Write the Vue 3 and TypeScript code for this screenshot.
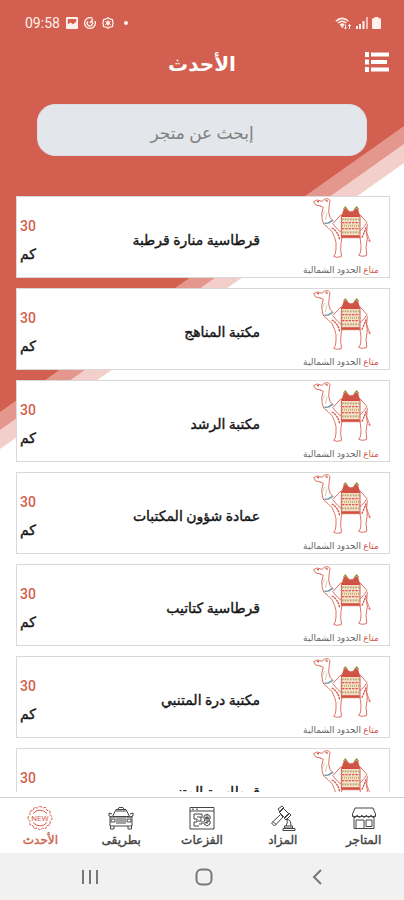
<script setup lang="ts">
import { ref } from 'vue'

interface Store {
  id: number
  name: string
  distance: number
}

interface Tab {
  id: string
  label: string
}

const query = ref('')
const activeTab = ref('latest')

const stores: Store[] = [
  { id: 1, name: 'قرطاسية منارة قرطبة', distance: 30 },
  { id: 2, name: 'مكتبة المناهج', distance: 30 },
  { id: 3, name: 'مكتبة الرشد', distance: 30 },
  { id: 4, name: 'عمادة شؤون المكتبات', distance: 30 },
  { id: 5, name: 'قرطاسية كتاتيب', distance: 30 },
  { id: 6, name: 'مكتبة درة المتنبي', distance: 30 },
  { id: 7, name: 'قرطاسية المتنبي', distance: 30 },
]

const tabs: Tab[] = [
  { id: 'stores', label: 'المتاجر' },
  { id: 'auction', label: 'المزاد' },
  { id: 'help', label: 'الفزعات' },
  { id: 'route', label: 'بطريقى' },
  { id: 'latest', label: 'الأحدث' },
]
</script>

<template>
  <div class="app" dir="rtl">
    <svg class="backdrop" viewBox="0 0 404 450" preserveAspectRatio="none" aria-hidden="true">
      <path d="M0 0H404V163L0 449Z" fill="#f3cfcb" />
      <path d="M0 0H404V144L0 430Z" fill="#e4978d" />
      <path d="M0 0H404V126L0 412Z" fill="#d25f4f" />
    </svg>

    <div class="status" dir="ltr">
      <div class="status-group">
        <span class="clock">09:58</span>
        <svg class="glyph" viewBox="0 0 12 12"><path d="M1 0h10a1 1 0 0 1 1 1v10a1 1 0 0 1-1 1H1a1 1 0 0 1-1-1V1a1 1 0 0 1 1-1zm.8 2v5.5L4.500 5.500 7 7.200l3.200-2.500V2z" fill="currentColor" fill-rule="evenodd" /></svg>
        <svg class="glyph" viewBox="0 0 12 12" fill="none" stroke="currentColor"><path d="M8.500 1.200A5.400 5.400 0 1 0 11 4" stroke-width="1.300" /><path d="M4 4.200A2.700 2.700 0 1 0 8 4.500M6 6l3-4" stroke-width="1.300" /></svg>
        <svg class="glyph" viewBox="0 0 12 12" fill="none" stroke="currentColor"><path d="M6 .7l2 1.200 2.600.7v2.500L11.300 6l-.7 1.300v2.300L8 10.100 6 11.300l-2-1.200-2.600-.5V7.300L.7 6l.7-1.300V2.600L4 1.900z" stroke-width="1.200" /><circle cx="6" cy="6" r="1.500" fill="currentColor" /><path d="M6 2.500v7M3 4.200l6 3.600M9 4.200L3 7.800" stroke-width=".7" /></svg>
        <span class="dot"></span>
      </div>
      <div class="status-group tight">
        <svg class="wifi" viewBox="0 0 17 13" fill="none" stroke="currentColor"><path d="M.8 4.200Q7 -1.500 13.500 4.200M3 6q4-3.600 8.200 0M5.200 8q2-1.700 4 0" stroke-width="1.500" /><path d="M7.200 11L5 8.300h4.400z" fill="currentColor" stroke="none" /><path d="M10.500 12V7.500M9 10.500l1.500 1.500 1.500-1.500M14.500 7.500V12M13 9l1.500-1.500L16 9" stroke-width="1" /></svg>
        <svg class="signal" viewBox="0 0 12 12" fill="currentColor"><path d="M0 9h2v3H0zM3 7h2v5H3zM6.500 4h2v8h-2z" /><path d="M10 0h2v12h-2z" opacity=".65" /></svg>
        <svg class="battery" viewBox="0 0 9 12"><path d="M2.500 0h4v1.200H8a1 1 0 0 1 1 1V11a1 1 0 0 1-1 1H1a1 1 0 0 1-1-1V2.200a1 1 0 0 1 1-1h1.500z" fill="currentColor" /></svg>
      </div>
    </div>

    <header class="header">
      <button class="menu" type="button" aria-label="القائمة">
        <svg viewBox="0 0 24 20" fill="currentColor"><path d="M0 0h4v5H0zM6 .5h18v4H6zM0 7.500h4v5H0zM6 8h16v4H6zM0 15h4v5H0zM6 15.500h18v4H6z" /></svg>
      </button>
      <h1>الأحدث</h1>
    </header>

    <form class="search" @submit.prevent>
      <input v-model="query" type="text" placeholder="إبحث عن متجر" aria-label="إبحث عن متجر" />
    </form>

    <svg class="defs" aria-hidden="true">
      <symbol id="camel" viewBox="0 0 180 180">
        <g fill="none" stroke="#dd7365" stroke-width="3" stroke-linejoin="round" stroke-linecap="round">
          <path d="M28 24L14 21 8 11 18 6 34 10 40 3 52 2 57 8 55 20 53 42 57 58 66 68" />
          <path d="M28 24l9 4-5 18 2 20 4 12 13 11 12 12 8 18 4 14v20l-2 14-5 8 9 3 14-2v-8l-2-10 1-24 3-15" />
          <path d="M66 76L90 50M66 78l14 16 10 8M147 50l21 24-8 11-13 14" />
          <path d="M147 118l3 24-1 20-6 10 10 3 14-2v-8l-2-16 4-28M169 80l-2 22 5 16 6 13-5-3M165 92l4 29" />
        </g>
        <path d="M18 11h6M44 7l6 3" stroke="#cb5144" stroke-width="4" />
        <path d="M43 66l5-22M34 54l7-16" stroke="#b1b785" stroke-width="2" />
        <path d="M40 76l12-1 14-8" fill="none" stroke="#77a1a9" stroke-width="5" />
        <path d="M62 90q18 8 24 34M165 88q-4 14-13 32" fill="none" stroke="#d7584b" stroke-width="4" stroke-dasharray="7 2" />
        <path d="M92 52l6-18 8-3 9 9h10l8-9 8 3 6 18z" fill="#cf5546" />
        <path d="M98 33l5-6 6 7M131 33l6-6 6 7" fill="none" stroke="#9b9145" stroke-width="4" />
        <path d="M91 52h56v67H91z" fill="#f3dfc8" stroke="#d7594c" stroke-width="3" />
        <path d="M92 54h54M92 115h54" stroke="#d14f40" stroke-width="6" />
        <path d="M93 64h52M93 103h52" stroke="#b9a873" stroke-width="5" stroke-dasharray="5 3" />
        <path d="M93 74h52M93 92h52" stroke="#d85b4d" stroke-width="4" stroke-dasharray="7 3" />
        <path d="M93 83h52" stroke="#c7ae62" stroke-width="6" stroke-dasharray="3 3" />
      </symbol>
    </svg>

    <main class="list">
      <article v-for="store in stores" :key="store.id" class="card">
        <div class="logo">
          <svg class="camel"><use href="#camel" /></svg>
          <p class="caption"><span>متاع</span> الحدود الشمالية</p>
        </div>
        <h2>{{ store.name }}</h2>
        <div class="distance">
          <span class="value">{{ store.distance }}</span>
          <span class="unit">كم</span>
        </div>
      </article>
    </main>

    <nav class="tabs">
      <button
        v-for="tab in tabs"
        :key="tab.id"
        type="button"
        :class="{ active: tab.id === activeTab }"
        @click="activeTab = tab.id"
      >
        <svg viewBox="0 0 26 26" fill="none" stroke="currentColor" stroke-width="1">
          <template v-if="tab.id === 'stores'">
            <path d="M4 3h18l2.500 6v2.500H1.500V9zM3 12v11.500h20V12M5 15h8v8.500M15 15h6v6.500h-6zM5 15v8" />
            <path d="M1.500 10q2.400 5 4.700 0 2.300 5 4.600 0 2.300 5 4.600 0 2.300 5 4.600 0 2.300 5 4.500 0" />
          </template>
          <template v-else-if="tab.id === 'auction'">
            <path d="M8 4l4-3 2 2-4 4zM9 7l4-4 6 6-4 4zM14 13l5-5 2 2-5 5zM10.500 9.500l2.500 2.500-8.500 9-3-3z" />
            <path d="M3 16.500l3 3M16 14q5 0 5 7M17 14q1 4-1 7M14.500 21h8v2h-8zM13 23.500h12v2H13z" />
          </template>
          <template v-else-if="tab.id === 'help'">
            <path d="M1 2.500h24v21.500H1zM1 6h24M3 4.200h2M7 4.200h2" />
            <path d="M5 9h8v4M5 9v5h3v3H5v4h5M8 12h4v4h-3M13 16v3h-3" />
            <path d="M18 9l3 2v3l-1.500 1 1.500 1v3l-3 2-3-2v-3l1.500-1-1.500-1v-3zM16 12l4 2M20 12l-4 2M16 18l4-2M18 10v9" />
          </template>
          <template v-else-if="tab.id === 'route'">
            <path d="M10 4l1-1.500h4L16 4M8 4.500h10l3.500 7h-17zM4 9L1 8v3l3 1M22 9l3-1v3l-3 1M2 12h22v9H2zM2.500 21v3H6v-3M20 21v3h3.500v-3" />
            <path d="M3 14h4v3H3zM19 14h4v3h-4zM8 14h10M8 16h10M8 18h10M8 6h10" />
          </template>
          <template v-else>
            <path d="M13 1l2.500 2 3.200-.6 1.300 2.900 3.100 1-.1 3.200 2 2.500v2l-2 2.500.1 3.200-3.100 1-1.300 2.900-3.200-.6L13 25l-2.500-2-3.200.6L6 20.700l-3.100-1 .1-3.200L1 14v-2l2-2.500-.1-3.200L6 5.300l1.300-2.900 3.200.6z" stroke-dasharray="3 1" />
            <path d="M6 8.500a9 9 0 0 1 14 0M6 17.500a9 9 0 0 0 14 0" />
            <text class="badge" x="13" y="16" text-anchor="middle">NEW</text>
          </template>
        </svg>
        <span>{{ tab.label }}</span>
      </button>
    </nav>

    <footer class="system" dir="ltr">
      <button type="button" aria-label="التطبيقات الأخيرة">
        <svg viewBox="0 0 18 18"><path d="M2 2v14M9 2v14M16 2v14" /></svg>
      </button>
      <button type="button" aria-label="الرئيسية">
        <svg viewBox="0 0 18 18"><rect x="1.500" y="1.500" width="15" height="15" rx="5" /></svg>
      </button>
      <button type="button" aria-label="رجوع">
        <svg viewBox="0 0 18 18"><path d="M12 2L5 9l7 7" /></svg>
      </button>
    </footer>
  </div>
</template>

<style>
body {
  background: #fff;
}
</style>

<style scoped>
.app {
  position: relative;
  display: flex;
  flex-direction: column;
  height: 100vh;
  overflow: hidden;
  color: #161616;
  font-family: Roboto, "DejaVu Sans", sans-serif;
}

button {
  padding: 0;
  border: 0;
  background: none;
  color: inherit;
  font: inherit;
  cursor: pointer;
}

svg {
  display: block;
}

.backdrop {
  position: absolute;
  z-index: -1;
  top: 0;
  left: 0;
  width: 100%;
  height: 450px;
}

.defs {
  position: absolute;
  width: 0;
  height: 0;
}

.status {
  display: flex;
  align-items: center;
  justify-content: space-between;
  height: 46px;
  padding: 0 23px 0 25px;
  color: #fff0ec;
}

.status-group {
  display: flex;
  align-items: center;
  gap: 6px;
}

.status-group.tight {
  gap: 4px;
}

.clock {
  font-size: 14px;
}

.glyph {
  width: 12px;
  height: 12px;
}

.dot {
  width: 4px;
  height: 4px;
  margin-left: 4px;
  border-radius: 50%;
  background: currentColor;
}

.wifi {
  width: 17px;
  height: 13px;
}

.signal {
  width: 12px;
  height: 12px;
}

.battery {
  width: 9px;
  height: 12px;
}

.header {
  display: grid;
  grid-template-columns: 24px 1fr 24px;
  align-items: center;
  height: 32px;
  padding: 0 15px;
  color: #fff;
}

.menu svg {
  width: 24px;
  height: 20px;
}

h1 {
  margin: 0;
  padding-top: 4px;
  font-size: 20px;
  line-height: 28px;
  font-weight: 700;
  text-align: center;
}

.search {
  padding: 26px 37px 0;
}

.search input {
  box-sizing: border-box;
  display: block;
  width: 100%;
  height: 52px;
  padding: 6px 16px 0;
  border: 1px solid #dcdfe3;
  border-radius: 18px;
  outline: 0;
  background: #e3e6ea;
  color: #555;
  font: inherit;
  font-size: 17px;
  text-align: center;
  appearance: none;
}

.search input::placeholder {
  color: #808080;
  opacity: 1;
}

.list {
  display: flex;
  flex: 1;
  flex-direction: column;
  gap: 10px;
  min-height: 0;
  margin: 40px 14px 5px 16px;
  overflow-y: auto;
  scrollbar-width: none;
}

.card {
  box-sizing: border-box;
  display: flex;
  flex: none;
  align-items: center;
  height: 82px;
  padding: 0 11px 0 3px;
  border: 1px solid #d9d9d9;
  background: #fff;
}

.logo {
  display: flex;
  flex-direction: column;
  align-items: center;
  width: 74px;
}

.camel {
  width: 60px;
  height: 60px;
}

.caption {
  margin: 6px 0 0;
  color: #666;
  font-size: 9px;
  line-height: 12px;
  white-space: nowrap;
}

.caption span {
  color: #d3574a;
}

h2 {
  flex: 1;
  margin: 0;
  padding: 6px 44px 0 0;
  font-size: 14px;
  line-height: 20px;
  font-weight: 400;
  -webkit-text-stroke: 0.4px currentColor;
}

.distance {
  display: flex;
  flex-direction: column;
  align-items: flex-end;
  gap: 8px;
  min-width: 17px;
  padding-top: 6px;
  font-size: 14px;
  line-height: 20px;
  font-weight: 500;
}

.value {
  color: #d25f4f;
}

.unit {
  font-weight: 400;
  -webkit-text-stroke: 0.4px currentColor;
}

.tabs {
  display: grid;
  grid-template-columns: repeat(5, 1fr);
  height: 55px;
  border-top: 1px solid #cfcfcf;
  background: #fff;
  color: #444;
}

.tabs button {
  display: flex;
  flex-direction: column;
  align-items: center;
  gap: 0;
  padding-top: 7px;
  font-size: 12px;
  line-height: 18px;
}

.tabs button span {
  -webkit-text-stroke: 0.4px currentColor;
}

.tabs svg {
  width: 26px;
  height: 26px;
}

.badge {
  fill: currentColor;
  stroke: none;
  font-size: 8px;
}

.tabs .active {
  color: #d25f4f;
}

.system {
  display: flex;
  justify-content: center;
  gap: 78px;
  height: 47px;
  padding-left: 4px;
  background: #f1f1f1;
}

.system button {
  width: 36px;
}

.system svg {
  width: 18px;
  height: 18px;
  margin: 0 auto;
  fill: none;
  stroke: #777;
  stroke-width: 2;
}
</style>
